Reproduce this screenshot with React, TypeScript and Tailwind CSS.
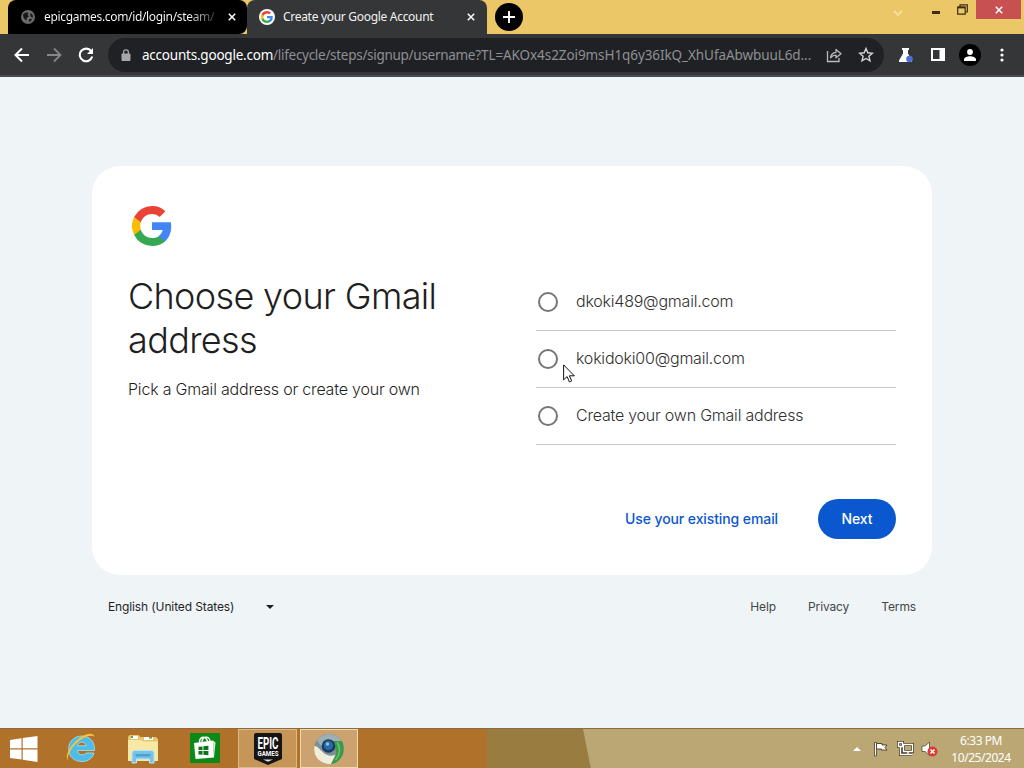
import { useState } from "react";
import type { ReactNode } from "react";

const suggestions = ["dkoki489@gmail.com", "kokidoki00@gmail.com", "Create your own Gmail address"];

function GoogleLogo({ className }: { className?: string }) {
  return (
    <svg viewBox="0 0 40 40" className={className}>
      <path fill="#4285f4" d="M39.2 20.45c0-1.42-.13-2.78-.36-4.09H20v7.74h10.77a9.2 9.2 0 0 1-4 6.04v5.02h6.46c3.78-3.48 5.97-8.6 5.97-14.71z" />
      <path fill="#34a853" d="M20 40c5.4 0 9.93-1.79 13.23-4.84l-6.46-5.02c-1.79 1.2-4.08 1.91-6.77 1.91-5.21 0-9.62-3.52-11.2-8.25H2.13v5.18A20 20 0 0 0 20 40z" />
      <path fill="#fbbc05" d="M8.8 23.8a12 12 0 0 1 0-7.6v-5.18H2.13a20 20 0 0 0 0 17.96z" />
      <path fill="#ea4335" d="M20 7.95c2.94 0 5.57 1.01 7.65 2.99l5.73-5.73A19.2 19.2 0 0 0 20 0 20 20 0 0 0 2.13 11.02L8.8 16.2C10.38 11.47 14.79 7.95 20 7.95z" />
    </svg>
  );
}

function CloseIcon() {
  return (
    <svg viewBox="0 0 10 10" className="h-2 w-2 shrink-0" stroke="#fff" strokeWidth="1.9">
      <path d="M1 1l8 8M9 1L1 9" />
    </svg>
  );
}

function TabStrip() {
  return (
    <div className="flex h-[34px] bg-[#ecc767] pl-2">
      <div className="flex w-[239px] items-center rounded-t-lg rounded-br-lg bg-black pr-[11px] pl-[13px] text-[12px] text-[#eee]">
        <svg viewBox="0 0 14 14" className="mr-[9px] h-3.5 w-3.5 shrink-0">
          <circle cx="7" cy="7" r="7" fill="#6b6b6b" />
          <path d="M2 4.5l2.5-2 3 .3-1 2.2 1.6 1.3-2.6 1.7.6 2-2-.2L2.500 7.500zM9 3.200l2.400 1 .8 3.200-2.500-.7zM8.300 9l3-.2-2 2.800-1.500.200z" fill="#161616" />
        </svg>
        <span className="bg-gradient-to-r from-white from-85% to-[#444] bg-clip-text tracking-[-0.33px] whitespace-nowrap text-transparent">
          epicgames.com/id/login/steam/
        </span>
        <span className="ml-auto flex"><CloseIcon /></span>
      </div>
      <div className="flex w-[240px] items-center rounded-t-lg bg-[#353638] pr-3 pl-3 text-[12px] text-[#f1f1f1]">
        <span className="mr-2 grid h-4 w-4 shrink-0 place-items-center rounded-full bg-white">
          <GoogleLogo className="h-3 w-3" />
        </span>
        <span className="tracking-[-0.3px] whitespace-nowrap">Create your Google Account</span>
        <span className="ml-auto flex"><CloseIcon /></span>
      </div>
      <div className="mt-[3px] ml-2 grid h-7 w-7 place-items-center rounded-full bg-black">
        <svg viewBox="0 0 12 12" className="h-3 w-3" stroke="#fff" strokeWidth="1.9">
          <path d="M6 0v12M0 6h12" />
        </svg>
      </div>
      <svg viewBox="0 0 10 6" className="mt-[10px] ml-[370px] h-[6px] w-[10px]" fill="none" stroke="#f8dfa0" strokeWidth="1.8">
        <path d="M1 1l4 4 4-4" />
      </svg>
      <div className="mt-[11px] ml-[29px] h-[2.500px] w-2 bg-[#3c2c10]" />
      <svg viewBox="0 0 11 11" className="mt-1 ml-[17px] h-[11px] w-[11px]" fill="none" stroke="#3c2c10" strokeWidth="1.200">
        <path d="M3 3V.8h7.300V8H8.500" />
        <path d="M.7 3.200h7.500v7H.7z" />
        <path d="M.7 3.500h7.500" strokeWidth="1.800" />
      </svg>
      <div className="ml-[8px] grid h-[19px] w-[45px] place-items-center bg-[#c75050]">
        <CloseIcon />
      </div>
    </div>
  );
}

function Toolbar() {
  return (
    <div className="flex h-[43px] items-center border-b-2 border-[#4a4a4e] bg-[#353638] pl-[14px]">
      <svg viewBox="0 0 16 16" className="h-4 w-4" fill="none" stroke="#fff" strokeWidth="2">
        <path d="M15 8H2M8 1.500L1.500 8 8 14.500" />
      </svg>
      <svg viewBox="0 0 16 16" className="ml-4 h-4 w-4" fill="none" stroke="#85868a" strokeWidth="1.800">
        <path d="M1 8h13M8 1.500L14.500 8 8 14.500" />
      </svg>
      <svg viewBox="0 0 16 16" className="ml-4 h-4 w-4" fill="none" stroke="#fff" strokeWidth="2.100">
        <path d="M13.200 4.200A6.300 6.300 0 1 0 14.200 9.500" />
        <path d="M15 1v6H9z" fill="#fff" stroke="none" />
      </svg>
      <div className="ml-[14px] flex h-[34px] w-[776px] items-center rounded-full bg-[#202125] pr-[10px] pl-[13px]">
        <svg viewBox="0 0 10 12" className="h-3 w-[10px] shrink-0">
          <rect x=".5" y="4.500" width="9" height="7.500" rx="1" fill="#a5a6a8" />
          <path d="M2.600 5V3.200a2.400 2.400 0 0 1 4.800 0V5" fill="none" stroke="#a5a6a8" strokeWidth="1.300" />
        </svg>
        <div className="ml-[11px] w-[679px] pt-[2px] text-[13.5px] tracking-[-0.29px] whitespace-nowrap text-[#8e9093]">
          <span className="tracking-[-0.22px] text-white">accounts.google.com</span>
          /lifecycle/steps/signup/username
          <span className="tracking-[-0.08px]">?TL=AKOx4s2Zoi9msH1q6y36IkQ_XhUfaAbwbuuL6d...</span>
        </div>
        <svg viewBox="0 0 16 16" className="ml-[5px] h-4 w-4 shrink-0" fill="none" stroke="#b9babc" strokeWidth="1.300">
          <path d="M1.500 4v10.500H13V11" />
          <path d="M4.500 10.800C5 7 7 5.500 10 5.300V2.500l5 4.300-5 4V8.200c-2.300 0-4 .8-5.500 2.600z" strokeLinejoin="round" />
        </svg>
        <svg viewBox="0 0 16 16" className="ml-4 h-4 w-4 shrink-0" fill="none" stroke="#d5d5d6" strokeWidth="1.400">
          <path d="M8 1.500l1.800 4.300 4.700.4-3.600 3.100 1.100 4.600L8 11.500l-4 2.400 1.100-4.600L1.500 6.200l4.700-.4z" />
        </svg>
      </div>
      <svg viewBox="0 0 16 16" className="ml-[14px] h-4 w-4">
        <path d="M4 1h7v2h-1v3.500l4 7V15H1v-1.500l4-7V3H4z" fill="#fff" />
        <circle cx="11.500" cy="12" r="3.300" fill="#4b6fd6" />
      </svg>
      <svg viewBox="0 0 14 13" className="ml-[17px] h-[13px] w-[14px]">
        <path d="M0 0h14v13H0zM2 2v9h6.500V2z" fill="#fff" fillRule="evenodd" />
      </svg>
      <div className="ml-[14px] grid h-[22px] w-[22px] place-items-center rounded-full bg-black">
        <svg viewBox="0 0 12 12" className="h-3 w-3" fill="#fff">
          <circle cx="6" cy="3" r="2.900" />
          <path d="M0 12v-1.500C0 8.300 3.500 7.200 6 7.200s6 1.100 6 3.300V12z" />
        </svg>
      </div>
      <svg viewBox="0 0 4 14" className="ml-[19px] h-[14px] w-1" fill="#fff">
        <circle cx="2" cy="2" r="1.600" />
        <circle cx="2" cy="7" r="1.600" />
        <circle cx="2" cy="12" r="1.600" />
      </svg>
    </div>
  );
}

function Cursor() {
  return (
    <svg viewBox="0 0 12 19" className="absolute top-[364px] left-[563px] h-[19px] w-3">
      <path d="M.6.9v15l3.500-3.300 2.300 5.300 2.300-1-2.300-5.100h4.900z" fill="#fff" stroke="#111" strokeWidth="1" />
    </svg>
  );
}

function SignupCard() {
  const [selected, setSelected] = useState<string | null>(null);

  return (
    <div className="flex h-[409px] w-[840px] flex-col rounded-[28px] bg-white p-9">
      <GoogleLogo className="m-1 h-10 w-10" />
      <div className="mt-6 flex justify-between">
        <div className="w-[360px]">
          <h1 className="text-[36px] leading-[44px] font-light tracking-[-0.65px] text-[#1f1f1f]">
            Choose your Gmail address
          </h1>
          <p className="mt-[15px] text-[16px] leading-6 font-light tracking-[-0.2px] text-[#1f1f1f]">
            Pick a Gmail address or create your own
          </p>
        </div>
        <div className="w-[360px]">
          {suggestions.map((s) => (
            <button
              key={s}
              type="button"
              onClick={() => setSelected(s)}
              className="flex h-[57px] w-full items-center border-b border-[#c4c7c5] pl-[2px] text-left text-[16px] font-light tracking-[-0.22px] text-[#303030]"
            >
              <span className="mr-[18px] grid h-5 w-5 place-items-center rounded-full border-2 border-[#747775]">
                {selected === s && <span className="h-2.5 w-2.5 rounded-full bg-[#0b57d0]" />}
              </span>
              <span className="pb-[2px]">{s}</span>
            </button>
          ))}
        </div>
      </div>
      <div className="mt-auto flex items-center justify-end text-[14px] font-medium tracking-[-0.1px]">
        <button type="button" className="mr-10 pb-px text-[#0b57d0]">Use your existing email</button>
        <button type="button" className="h-10 w-[78px] rounded-full bg-[#0b57d0] pb-px text-white">Next</button>
      </div>
    </div>
  );
}

function Footer() {
  return (
    <div className="mt-[22px] flex h-5 w-[808px] items-center text-[12px] tracking-[-0.12px] text-[#1f1f1f]">
      <span>English (United States)</span>
      <span className="ml-8 h-0 w-0 border-x-[4.5px] border-t-[4.5px] border-x-transparent border-t-[#1f1f1f]" />
      <div className="ml-auto flex gap-8 text-[#444746]">
        <span>Help</span>
        <span>Privacy</span>
        <span>Terms</span>
      </div>
    </div>
  );
}

function RunningApp({ children, active }: { children: ReactNode; active?: boolean }) {
  return (
    <div
      className={
        active
          ? "grid h-[39px] w-[58px] place-items-center border border-[#f2dcae] bg-[#cba270]"
          : "grid h-[39px] w-[59px] place-items-center border border-[#e0b982] bg-[#c69558]"
      }
    >
      {children}
    </div>
  );
}

function Taskbar() {
  return (
    <div className="relative flex h-10 items-center overflow-hidden border-t border-[#8d6a42] bg-[#b0722b]">
      <svg viewBox="0 0 1024 40" className="absolute inset-0 h-10 w-full" preserveAspectRatio="none">
        <path d="M487 0h537v40H487z" fill="#997c40" />
        <path d="M583 0h441v40H591z" fill="#bba773" />
      </svg>
      <div className="relative flex h-full w-full items-center pl-[10px]">
        <svg viewBox="0 0 28 26" className="h-[26px] w-7" fill="#fff">
          <path d="M0 4l11.500-1.700v10H0zM12.700 2.100L27.500 0v12.300H12.700zM0 13.500h11.500v10L0 21.900zM12.700 13.500h14.800V26l-14.800-2.200z" />
        </svg>
        <svg viewBox="0 0 32 32" className="mb-0.5 ml-[27px] h-8 w-8">
          <path d="M29.500 18.500H12.500c.4 3 2.200 4.300 4.600 4.300 1.800 0 3.100-.6 3.900-1.800h8C27.500 26.600 23 29.500 17 29.500 9 29.500 3.700 24.600 3.700 17S9 4 17 4c8 0 13 6 12.500 14.500zM12.500 13.800h8.600c-.3-2.300-1.900-3.600-4.300-3.600s-3.900 1.300-4.300 3.600z" fill="#4dbde8" stroke="#a5e3f6" strokeWidth=".8" />
          <path d="M2.500 28.500C-1 21 10.500 6.500 20 3c5-2 8.500-1.500 9.500 1.500C25.500 2.500 20.500 4 14.500 8.500 7.500 14 2.500 22 2.500 28.500z" fill="#f9c23c" />
        </svg>
        <svg viewBox="0 0 32 30" className="ml-[30px] h-[30px] w-8">
          <path d="M1 3l1.500-2h9l2 2H29l2 2v21H1z" fill="#e6c86c" />
          <path d="M4 2h7v3H4zM17 3h9v3h-9z" fill="#fff" />
          <path d="M4 2h2v2H4zM22 3h3v1.500h-3z" fill="#5aa25b" />
          <path d="M1 6h13l2 1.500h15V27H1z" fill="#f8e8a5" />
          <path d="M5 29V19q0-2.500 2.500-2.500h17Q27 16.500 27 19v10h-4.500v-4h-13v4z" fill="#79c3e8" stroke="#b7e4f7" />
          <path d="M8.500 20h15v2.500h-15z" fill="#4f9fd0" />
        </svg>
        <svg viewBox="0 0 30 30" className="mb-px ml-[31px] h-[30px] w-[30px]">
          <path d="M0 0h30v30H0z" fill="#0c8a17" />
          <path d="M4 10l19-2.500 1 17L5.500 26z" fill="#fff" />
          <path d="M23 7.500l2.500 2-1.500 15z" fill="#d9ecd9" />
          <path d="M9.500 10c-.5-7 7.500-8 8-1M12 9c0-6 7.500-6.500 8-1" fill="none" stroke="#fff" strokeWidth="1.400" />
          <path d="M8.500 13.800l4-.4v3.700h-4zM13.400 13.300l5-.5v4.300h-5zM8.500 18h4v3.700l-4-.3zM13.400 18h5v4.300l-5-.5z" fill="#0c7416" />
        </svg>
        <div className="ml-[18px] flex gap-[3px]">
          <RunningApp>
            <svg viewBox="0 0 28 32" className="h-8 w-7 overflow-visible">
              <path d="M2 0h24q2 0 2 2v24l-14 6L0 26V2q0-2 2-2z" fill="#151515" />
              <text x="14" y="15.500" textAnchor="middle" textLength="21" lengthAdjust="spacingAndGlyphs" fill="#fff" className="font-['Roboto','Liberation_Sans',sans-serif] text-[16px] font-bold">EPIC</text>
              <text x="14" y="23.200" textAnchor="middle" textLength="21" lengthAdjust="spacingAndGlyphs" fill="#fff" className="font-['Roboto','Liberation_Sans',sans-serif] text-[7px] font-bold">GAMES</text>
              <path d="M9 26.500h10L14 28.800z" fill="#ddd" />
            </svg>
          </RunningApp>
          <RunningApp active>
            <svg viewBox="0 0 32 32" className="h-8 w-8">
              <circle cx="16" cy="16" r="15" fill="#7d9096" />
              <path d="M1.500 13C6 13 9 21 16 22.500c3 .5 5 0 6.500-1L18 31C6 31.500-.5 22 1.500 13z" fill="#f0eedb" />
              <path d="M21 7.500h7.500C33.500 16 29 30 18 31c3-4 6.500-9.500 4.500-15z" fill="#3a9a46" />
              <path d="M24 9c4 6 3 13-1.500 18" fill="none" stroke="#6cc06d" strokeWidth="1.500" />
              <path d="M4 7.500C9 0 22-1.500 28.500 8H17c-4 .5-6.500 4-6 8z" fill="#9db0b4" />
              <circle cx="15.500" cy="13" r="6.800" fill="#173b60" />
              <circle cx="15.500" cy="12.500" r="4.700" fill="#2a68a8" />
              <circle cx="14.500" cy="11" r="1.800" fill="#83c2e8" />
            </svg>
          </RunningApp>
        </div>
        <div className="ml-auto flex items-center">
          <span className="mr-[12px] h-0 w-0 border-x-[4.5px] border-b-[4.5px] border-x-transparent border-b-white" />
          <svg viewBox="0 0 16 16" className="mr-2 h-4 w-4">
            <path d="M1.500 1.500h2V15h-2z" fill="#fff" stroke="#463b26" strokeWidth=".8" />
            <path d="M3.500 2.500H9V4h5l-2 2.500L14 9H8.500V8h-5z" fill="#fff" stroke="#463b26" strokeWidth=".9" />
          </svg>
          <svg viewBox="0 0 17 16" className="mr-[7px] h-4 w-[17px]" fill="none">
            <path d="M6.500 3.500h9v7h-9zM11 10.500V13M7 13.500h8M3.500 5v8.500H7M1.500 1.500h4v4h-4z" stroke="#463b26" strokeWidth="3" />
            <path d="M6.500 3.500h9v7h-9zM11 10.500V13M7 13.500h8M3.500 5v8.500H7M1.500 1.500h4v4h-4z" stroke="#fff" strokeWidth="1.400" />
          </svg>
          <svg viewBox="0 0 17 16" className="h-4 w-[17px]">
            <path d="M1 5h3l4.500-4v13.500L4 10.500H1z" fill="#fff" stroke="#54462c" strokeWidth=".8" />
            <circle cx="11.500" cy="10.500" r="5" fill="#d73c32" />
            <path d="M9.500 8.500l4 4M13.500 8.500l-4 4" stroke="#fff" strokeWidth="1.500" />
          </svg>
          <div className="mr-[13px] ml-[13px] w-[60px] text-center text-[12px] leading-[17px] tracking-[-0.45px] whitespace-nowrap text-white">
            <div>6:33 PM</div>
            <div>10/25/2024</div>
          </div>
        </div>
      </div>
    </div>
  );
}

export default function App() {
  return (
    <div className="relative flex h-[768px] w-[1024px] flex-col overflow-hidden bg-[#eff4f7] font-['Noto_Sans','Open_Sans',sans-serif]">
      <TabStrip />
      <Toolbar />
      <main className="flex flex-1 flex-col items-center pt-[89px] font-['Inter',sans-serif]">
        <SignupCard />
        <Footer />
      </main>
      <Taskbar />
      <Cursor />
    </div>
  );
}
